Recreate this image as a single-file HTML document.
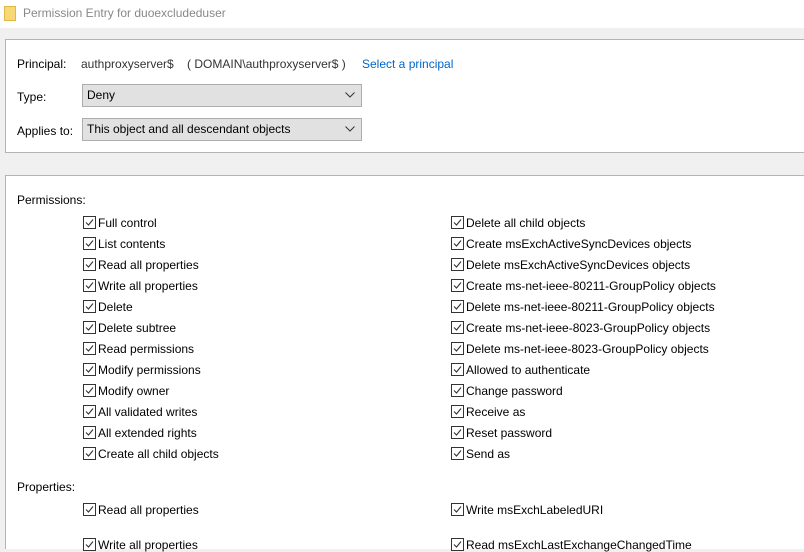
<!DOCTYPE html>
<html><head><style>
body{margin:0;width:804px;height:552px;overflow:hidden;background:#f0f0f0;font-family:"Liberation Sans",sans-serif;font-size:12px;color:#000;position:relative}
.t{position:absolute;white-space:nowrap;line-height:14px}
.title{position:absolute;left:0;top:0;width:804px;height:28px;background:#fff}
.panel{position:absolute;left:5px;width:820px;background:#fff;border:1px solid #b4b4b4}
.dd{position:absolute;left:82px;width:278px;height:21px;background:#e1e1e1;border:1px solid #adadad}
.dd span{position:absolute;left:4px;top:3px}
.dd svg{position:absolute;right:6px;top:7px}
.cb{position:absolute;width:11px;height:11px;border:1px solid #333;background:#fff}
.cb svg{position:absolute;left:1px;top:1px}
</style></head><body>
<div class="title"></div>
<div style="position:absolute;left:4px;top:6px;width:12px;height:15px;background:#f8d775;border:1px solid #e0b84a;box-sizing:border-box"></div>
<div class="t" style="left:23px;top:6px;color:#888;font-size:12px">Permission Entry for duoexcludeduser</div>
<div class="panel" style="top:39px;height:112px"></div>
<div class="t" style="left:17px;top:57px">Principal:</div>
<div class="t" style="left:81px;top:57px;color:#333">authproxyserver$ &nbsp;&nbsp; ( DOMAIN\authproxyserver$ )</div>
<div class="t" style="left:362px;top:57px;color:#0066cc">Select a principal</div>
<div class="t" style="left:17px;top:90px">Type:</div>
<div class="dd" style="top:84px"><span>Deny</span><svg width="10" height="6"><path d="M0.5 0.5L5 5L9.5 0.5" fill="none" stroke="#333"/></svg></div>
<div class="t" style="left:17px;top:124px">Applies to:</div>
<div class="dd" style="top:118px"><span>This object and all descendant objects</span><svg width="10" height="6"><path d="M0.5 0.5L5 5L9.5 0.5" fill="none" stroke="#333"/></svg></div>
<div class="panel" style="top:175px;height:373px"></div>
<div style="position:absolute;left:0;top:549px;width:804px;height:3px;background:#f0f0f0"></div>
<div class="t" style="left:17px;top:193px">Permissions:</div>
<div class="t" style="left:17px;top:480px">Properties:</div>
<div id="rows"></div>
<script>
var L=["Full control","List contents","Read all properties","Write all properties","Delete","Delete subtree","Read permissions","Modify permissions","Modify owner","All validated writes","All extended rights","Create all child objects"];
var R=["Delete all child objects","Create msExchActiveSyncDevices objects","Delete msExchActiveSyncDevices objects","Create ms-net-ieee-80211-GroupPolicy objects","Delete ms-net-ieee-80211-GroupPolicy objects","Create ms-net-ieee-8023-GroupPolicy objects","Delete ms-net-ieee-8023-GroupPolicy objects","Allowed to authenticate","Change password","Receive as","Reset password","Send as"];
var h="";
function row(x,y,s){h+='<div class="cb" style="left:'+x+'px;top:'+(y-7)+'px"><svg width="9" height="9"><path d="M1 4.5L3.5 7L8 1.5" fill="none" stroke="#333" stroke-width="1.1"/></svg></div><div class="t" style="left:'+(x+15)+'px;top:'+(y-7)+'px">'+s+'</div>';}
for(var i=0;i<12;i++){row(83,223+21*i,L[i]);row(451,223+21*i,R[i]);}
row(83,510,"Read all properties");row(451,510,"Write msExchLabeledURI");
row(83,545,"Write all properties");row(451,545,"Read msExchLastExchangeChangedTime");
document.getElementById("rows").innerHTML=h;
</script>
</body></html>
